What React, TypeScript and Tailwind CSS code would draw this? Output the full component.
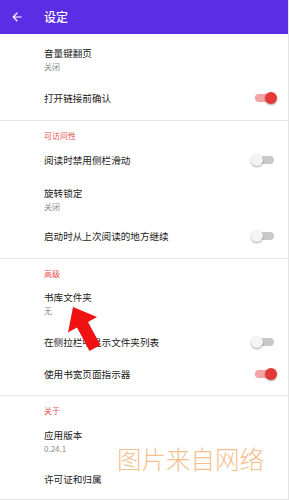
import React from 'react';

const Toggle: React.FC<{ on?: boolean }> = ({ on }) => (
  <div className="relative w-[26px] h-[14px] flex items-center">
    <div className={`mx-auto w-[19px] h-[8px] rounded-full ${on ? 'bg-[#f4a3a3]' : 'bg-[#c9c9c9]'}`} />
    <div
      className={`absolute top-[1px] w-[12px] h-[12px] rounded-full shadow-[0_1px_2px_rgba(0,0,0,0.35)] ${
        on ? 'right-0 bg-[#e53935]' : 'left-0 bg-[#f4f4f4]'
      }`}
    />
  </div>
);

const Row: React.FC<{ title: string; sub?: string; toggle?: 'on' | 'off'; className?: string }> = ({
  title,
  sub,
  toggle,
  className = '',
}) => (
  <div className={`flex items-center justify-between pl-[44px] pr-[11px] ${className}`}>
    <div className="flex flex-col">
      <div className="h-[14px] leading-[14px] text-[9.6px] text-[#222]">{title}</div>
      {sub && <div className="mt-[1px] h-[12px] leading-[12px] text-[8px] text-[#8a8a8a]">{sub}</div>}
    </div>
    {toggle && <Toggle on={toggle === 'on'} />}
  </div>
);

const Header: React.FC<{ label: string }> = ({ label }) => (
  <div className="pl-[44px] h-[12px] leading-[12px] text-[8px] text-[#e55050]">{label}</div>
);

const Divider = () => <div className="h-px bg-[#e6e6e6]" />;

export default function App() {
  return (
    <div
      className="relative w-[289px] h-[500px] overflow-hidden bg-white border-r border-b border-[#e4e4e4]"
      style={{ fontFamily: '"Noto Sans CJK SC", "Noto Sans", sans-serif' }}
    >
      {/* top bar */}
      <div className="h-[34px] bg-[#5b2de4] flex items-center text-white">
        <svg className="ml-[10px] w-[14px] h-[14px]" viewBox="0 0 24 24" fill="white">
          <path d="M20 11H7.83l5.59-5.59L12 4l-8 8 8 8 1.41-1.41L7.83 13H20v-2z" />
        </svg>
        <span className="ml-[20px] text-[12px] font-medium">设定</span>
      </div>

      <div className="pt-[12px] pb-[15px]">
        <Row title="音量键翻页" sub="关闭" />
        <Row title="打开链接前确认" toggle="on" className="mt-[18px]" />
      </div>
      <Divider />

      <div className="pt-[9px] pb-[15px]">
        <Header label="可访问性" />
        <Row title="阅读时禁用侧栏滑动" toggle="off" className="mt-[11px]" />
        <Row title="旋转锁定" sub="关闭" className="mt-[19px]" />
        <Row title="启动时从上次阅读的地方继续" toggle="off" className="mt-[16px]" />
      </div>
      <Divider />

      <div className="pt-[9px] pb-[14px]">
        <Header label="高级" />
        <Row title="书库文件夹" sub="无" className="mt-[10px]" />
        <Row title="在侧拉栏中显示文件夹列表" toggle="off" className="mt-[18px]" />
        <Row title="使用书宽页面指示器" toggle="on" className="mt-[18px]" />
      </div>
      <Divider />

      <div className="pt-[9px]">
        <Header label="关于" />
        <Row title="应用版本" sub="0.24.1" className="mt-[11px]" />
        <Row title="许可证和归属" className="mt-[17px]" />
      </div>

      {/* red arrow annotation */}
      <svg className="absolute left-0 top-0 pointer-events-none" width="289" height="500">
        <polygon
          points="73,307 97,317 88,322 100.5,345 89.5,351 77,327.5 68,332.5"
          fill="#f01212"
        />
      </svg>

      {/* watermark */}
      <div className="absolute left-[117px] top-[444px] text-[24.5px] leading-[30px] font-light text-[#f6c08e] tracking-[0px] pointer-events-none">
        图片来自网络
      </div>
    </div>
  );
}
